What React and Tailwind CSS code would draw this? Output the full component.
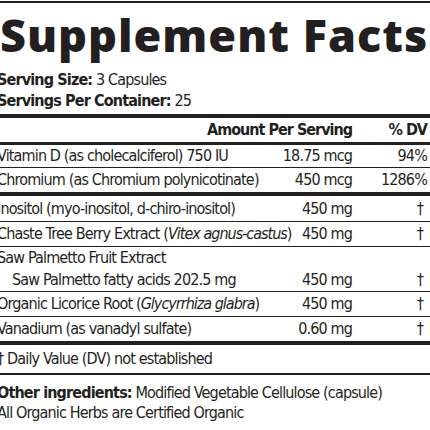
import React from 'react';

const rows = [
    { name: 'Vitamin D (as cholecalciferol) 750 IU', amount: '18.75 mcg', dv: '94%', line: 'thin', h: 'h-[22px]' },
    { name: 'Chromium (as Chromium polynicotinate)', amount: '450 mcg', dv: '1286%', line: 'thick', h: 'h-[24px]' },
    { name: 'Inositol (myo-inositol, d-chiro-inositol)', amount: '450 mg', dv: '†', line: 'thin', h: 'h-[25px]' },
    { name: 'Chaste Tree Berry Extract (', italic: 'Vitex agnus-castus', after: ')', amount: '450 mg', dv: '†', line: 'thin', h: 'h-[24px]' },
    { name: 'Saw Palmetto Fruit Extract', sub: 'Saw Palmetto fatty acids 202.5 mg', amount: '450 mg', dv: '†', line: 'thin' },
    { name: 'Organic Licorice Root (', italic: 'Glycyrrhiza glabra', after: ')', amount: '450 mg', dv: '†', line: 'thin', h: 'h-[24px]' },
    { name: 'Vanadium (as vanadyl sulfate)', amount: '0.60 mg', dv: '†', line: 'thick', h: 'h-[24px]' },
];

const Row = ({ row }) => {
    const lineCls = row.line === 'thick' ? 'border-b-4' : 'border-b';
    const dvCls = row.dv === '†' ? 'pr-[7px]' : 'pr-[3px]';
    return (
        <div className={`${lineCls} border-[#231f20]`}>
            {row.sub ? (
                <>
                    <div className="flex h-[22px] items-center">
                        <span className="flex-1">{row.name}</span>
                    </div>
                    <div className="flex h-[22px] items-center">
                        <span className="flex-1 min-w-0 pl-[15px]">{row.sub}</span>
                        <span className="w-[80px] shrink-0 text-right">{row.amount}</span>
                        <span className={`w-[78px] shrink-0 text-right ${dvCls}`}>{row.dv}</span>
                    </div>
                </>
            ) : (
                <div className={`flex items-center ${row.h}`}>
                    <span className="flex-1 min-w-0">
                        {row.name}
                        {row.italic && <i className="tracking-[-1px]">{row.italic}</i>}
                        {row.after}
                    </span>
                    <span className="w-[80px] shrink-0 text-right">{row.amount}</span>
                    <span className={`w-[78px] shrink-0 text-right ${dvCls}`}>{row.dv}</span>
                </div>
            )}
        </div>
    );
};

export default function App() {
    return (
        <div className="w-[430px] h-[430px] overflow-hidden bg-white text-[#231f20]">
            <div className="w-[433px] -ml-[3px] whitespace-nowrap font-['DejaVu_Sans_Condensed','DejaVu_Sans',sans-serif] [font-stretch:condensed] text-[16px] tracking-[-0.85px] leading-none">
                <div className="mt-[1px] h-[2px] bg-[#231f20]"></div>
                <h1 className="h-[63px] flex items-center pl-[3px] font-['Open_Sans',sans-serif] [font-stretch:normal] font-extrabold text-[45px] tracking-[1px]">
                    Supplement Facts
                </h1>
                <div className="pb-[6px]">
                    <p className="h-[21px] pt-[6px]">
                        <b>Serving Size:</b> 3 Capsules
                    </p>
                    <p className="h-[21px] pt-[6px]">
                        <b>Servings Per Container:</b> 25
                    </p>
                </div>
                <div className="h-[4px] bg-[#231f20]"></div>
                <div className="flex h-[27px] items-center border-b-[3px] border-[#231f20] font-bold tracking-[-1px]">
                    <span className="flex-1"></span>
                    <span className="text-right">Amount Per Serving</span>
                    <span className="w-[78px] pr-[3px] text-right">% DV</span>
                </div>
                {rows.map((row) => (
                    <Row key={row.name} row={row} />
                ))}
                <div className="flex h-[30px] items-center border-b-2 border-[#231f20]">
                    † Daily Value (DV) not established
                </div>
                <div className="pt-[7px]">
                    <p className="h-[20px] pt-[3px]">
                        <b>Other ingredients:</b> Modified Vegetable Cellulose (capsule)
                    </p>
                    <p className="h-[20px] pt-[3px]">All Organic Herbs are Certified Organic</p>
                </div>
            </div>
        </div>
    );
}
